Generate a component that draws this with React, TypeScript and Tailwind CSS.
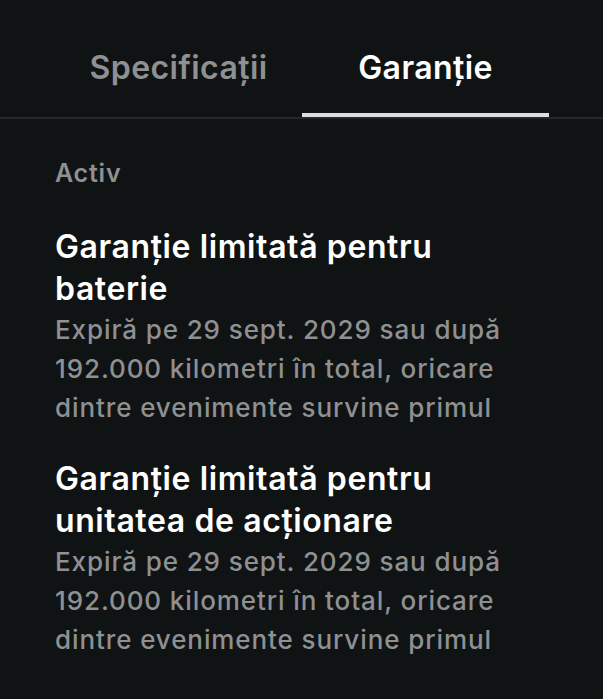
import React from "react";

export default function App() {
  const items = [
    "Garanție limitată pentru baterie",
    "Garanție limitată pentru unitatea de acționare",
  ];
  return (
    <div
      className="w-[603px] h-[699px] bg-[#101314] overflow-hidden"
      style={{ fontFamily: "Inter, 'Noto Sans', sans-serif" }}
    >
      <div className="border-b-2 border-[#26292b]">
        <div className="flex pl-[55px] pt-[48px]">
          <div className="w-[247px] flex justify-center pb-[25px] border-b-4 border-transparent">
            <span className="text-[32px] leading-[40px] font-semibold text-[#8e9092] tracking-[0.4px]">
              Specificații
            </span>
          </div>
          <div className="w-[247px] flex justify-center pb-[25px] border-b-4 border-[#dcdfe0]">
            <span className="text-[32px] leading-[40px] font-semibold text-white tracking-[0.4px]">
              Garanție
            </span>
          </div>
        </div>
      </div>
      <div className="pl-[55px] w-[515px] pt-[39px]">
        <div className="text-[25px] leading-[30px] font-semibold text-[#8e9092] tracking-[0.8px]">Activ</div>
        <div className="flex flex-col gap-[31px] mt-[38px]">
          {items.map((t) => (
            <div key={t}>
              <div className="text-[32px] leading-[42px] font-semibold text-white tracking-[0.6px]">{t}</div>
              <div className="text-[26px] leading-[39px] font-medium text-[#8e9092] tracking-[0.9px]">
                Expiră pe 29 sept. 2029 sau după 192.000 kilometri în total, oricare dintre evenimente survine primul
              </div>
            </div>
          ))}
        </div>
      </div>
    </div>
  );
}
